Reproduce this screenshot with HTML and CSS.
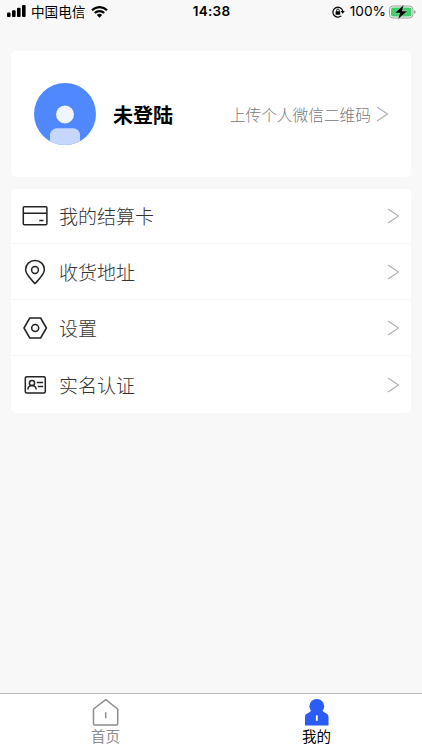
FILE: index.html
```
<!DOCTYPE html>
<html lang="zh-CN">
<head>
    <meta charset="UTF-8">
    <title>我的</title>
    <link rel="stylesheet" href="styles.css">
</head>
<body>
    <div id="container">
        <div id="status">
            <div class="st_left">
                <svg class="signal" width="19" height="12" viewBox="0 0 19 12">
                    <rect x="0" y="7.5" width="3.6" height="4.5" rx="1"/>
                    <rect x="5" y="5.3" width="3.6" height="6.7" rx="1"/>
                    <rect x="10" y="2.8" width="3.6" height="9.2" rx="1"/>
                    <rect x="15" y="0" width="3.6" height="12" rx="1"/>
                </svg>
                <span class="carrier">中国电信</span>
                <svg width="17" height="12" viewBox="0 0 17 12">
                    <path d="M1 4.2a10.6 10.6 0 0 1 15 0M3.8 7a6.6 6.6 0 0 1 9.4 0" fill="none" stroke="#000" stroke-width="2.2"/>
                    <path d="M8.5 11.8L5.8 9.1a3.8 3.8 0 0 1 5.4 0z"/>
                </svg>
            </div>
            <div class="st_time">14:38</div>
            <div class="st_right">
                <svg width="13" height="12" viewBox="0 0 13 12">
                    <path d="M9.3 9.9A5 5 0 1 1 10.8 5" fill="none" stroke="#000" stroke-width="1.2"/>
                    <path d="M8.6 5h4.2l-2.1 2.8z"/>
                    <rect x="3.6" y="5.2" width="4.6" height="3.6" rx=".5"/>
                    <path d="M4.6 5.4V4.3a1.3 1.3 0 0 1 2.6 0v1.1" fill="none" stroke="#000" stroke-width=".9"/>
                </svg>
                <span class="percent">100%</span>
                <svg width="27" height="16" viewBox="0 0 27 16">
                    <rect x=".5" y="2" width="23.4" height="12" rx="3.6" fill="#f8f8f8" stroke="#a0a0a0"/>
                    <rect x="2" y="3.5" width="20.4" height="9" rx="2.2" fill="#3fcf68"/>
                    <path d="M25 6v4c1-.4 1.5-1.1 1.5-2s-.5-1.6-1.5-2z" fill="#a0a0a0"/>
                    <path d="M14.8.8L5.6 9h5.2l-1.8 6.2L18.6 7h-5.3z" stroke="#e8f8ec" stroke-width=".4"/>
                </svg>
            </div>
        </div>

        <div id="profile" class="dbox">
            <svg class="avatar" width="62" height="62" viewBox="0 0 62 62">
                <clipPath id="round"><circle cx="31" cy="31" r="31"/></clipPath>
                <circle cx="31" cy="31" r="31" fill="#5089ff"/>
                <circle cx="31" cy="31.5" r="9" fill="#f1f5ff"/>
                <rect x="16" y="45.3" width="30" height="24" rx="7" fill="#c5d7ff" clip-path="url(#round)"/>
            </svg>
            <h2>未登陆</h2>
            <a href="#" class="upload">上传个人微信二维码</a>
            <svg class="arrow" width="13" height="16" viewBox="0 0 13 16"><path d="M1 1l10.5 7L1 15"/></svg>
        </div>

        <div id="menu" class="dbox">
            <a href="#" class="item">
                <svg class="icon" width="28" height="28" viewBox="0 0 28 28">
                    <rect x="2.3" y="4.8" width="23.6" height="18" rx="1"/>
                    <path d="M2.3 11.3h23.6M18.3 18.5h4.2"/>
                </svg>
                <span>我的结算卡</span>
                <svg class="arrow" width="13" height="16" viewBox="0 0 13 16"><path d="M1 1l10.5 7L1 15"/></svg>
            </a>
            <a href="#" class="item">
                <svg class="icon" width="28" height="28" viewBox="0 0 28 28">
                    <path d="M14 25.6C10 21.3 4.6 16.6 4.6 11.6a9.4 9.2 0 0 1 18.8 0C23.4 16.6 18 21.3 14 25.6z"/>
                    <circle cx="14" cy="12" r="3.4"/>
                </svg>
                <span>收货地址</span>
                <svg class="arrow" width="13" height="16" viewBox="0 0 13 16"><path d="M1 1l10.5 7L1 15"/></svg>
            </a>
            <a href="#" class="item">
                <svg class="icon" width="28" height="28" viewBox="0 0 28 28">
                    <path d="M8.8 4h10.8l5.8 10-5.8 10H8.8L3 14z"/>
                    <circle cx="14.2" cy="14" r="3.5"/>
                </svg>
                <span>设置</span>
                <svg class="arrow" width="13" height="16" viewBox="0 0 13 16"><path d="M1 1l10.5 7L1 15"/></svg>
            </a>
            <a href="#" class="item">
                <svg class="icon" width="28" height="28" viewBox="0 0 28 28">
                    <rect x="4.3" y="5.8" width="20" height="16.3" rx="1.5"/>
                    <circle cx="11" cy="12" r="2.6"/>
                    <path d="M6.8 18.5c.3-2.4 1.7-3.9 4.2-3.9s3.9 1.5 4.2 3.9M15.8 11.6h6.3M16.8 15.5h5.3"/>
                </svg>
                <span>实名认证</span>
                <svg class="arrow" width="13" height="16" viewBox="0 0 13 16"><path d="M1 1l10.5 7L1 15"/></svg>
            </a>
        </div>

        <div id="tabbar">
            <a href="#" class="tab">
                <svg width="28" height="28" viewBox="0 0 28 28">
                    <path d="M13.7 1.6L25.7 11v14.7a1.3 1.3 0 0 1-1.3 1.3H2.8A1.3 1.3 0 0 1 1.5 25.7V11z" fill="none" stroke="#8c8c8c" stroke-width="1.5" stroke-linejoin="round"/>
                    <path d="M13.7 14.3v6" stroke="#8c8c8c" stroke-width="1.5"/>
                </svg>
                <span>首页</span>
            </a>
            <a href="#" class="tab on">
                <svg width="28" height="28" viewBox="0 0 28 28">
                    <circle cx="13.8" cy="8.3" r="7.4" fill="#2b5cf5"/>
                    <path d="M8 12.500h11.600c.4 1.2 1.200 1.700 2.300 2.200 2.300.8 3.600 2.100 3.600 4.300v8.500H2V19c0-2.200 1.300-3.500 3.600-4.300 1.100-.5 2-1 2.400-2.200z" fill="#2b5cf5"/>
                    <path d="M13.8 17.3v5.5" stroke="#fff" stroke-width="1.8"/>
                </svg>
                <span>我的</span>
            </a>
        </div>
    </div>
</body>
</html>
```
FILE: styles.css
```
* {
    padding: 0px;
    margin: 0px;
    box-sizing: border-box;
    text-decoration: none;
}
body {
    background-color: #f8f8f8;
    font-family: "Noto Sans CJK SC", sans-serif;
}
#container {
    display: flex;
    flex-direction: column;
    width: 422px;
    height: 750px;
    overflow: hidden;
}
#status {
    display: grid;
    grid-template-columns: 1fr auto 1fr;
    align-items: center;
    height: 23px;
    padding: 0 6px 0 7px;
    color: #000;
    line-height: 23px;
    flex-shrink: 0;
}
.st_left, .st_right {
    display: flex;
    align-items: center;
}
.st_right {
    justify-content: flex-end;
}
.signal {
    margin-bottom: 1px;
}
.carrier {
    font-size: 13.6px;
    margin: 0 6px 0 5px;
}
.st_time {
    font-family: Inter, sans-serif;
    font-size: 13.5px;
    font-weight: 600;
    letter-spacing: 0.3px;
}
.percent {
    font-family: Inter, sans-serif;
    font-size: 13.7px;
    margin: 0 3px 0 5px;
}
.dbox {
    margin: 0 11px;
    background-color: #fff;
    border-radius: 5px;
    flex-shrink: 0;
}
#profile {
    display: flex;
    align-items: center;
    height: 126px;
    margin-top: 28px;
    margin-bottom: 12px;
    padding: 0 22px 0 23px;
}
#profile h2 {
    margin-left: 17px;
    font-size: 20px;
    font-weight: 700;
    color: #000;
}
.upload {
    margin-left: auto;
    margin-right: 5px;
    font-size: 15.7px;
    font-weight: 300;
    color: #777;
}
.arrow path {
    fill: none;
    stroke: #b0b0b0;
    stroke-width: 1.2;
}
.item {
    display: flex;
    align-items: center;
    height: 56px;
    padding: 1px 11px 0 10px;
    border-bottom: 1px solid #f7f7f7;
}
.item:first-child {
    height: 55px;
    padding-top: 0;
}
.item:last-child {
    height: 57px;
    padding-top: 0;
    border-bottom: none;
}
.item span {
    margin-left: 10px;
    padding-bottom: 1px;
    font-size: 19px;
    font-weight: 300;
    color: #333;
}
.item .arrow {
    margin-left: auto;
}
.icon {
    fill: none;
    stroke: #222;
    stroke-width: 1.5;
    stroke-linejoin: round;
}
#tabbar {
    display: flex;
    height: 57px;
    margin-top: auto;
    background-color: #fff;
    border-top: 1px solid #bbb;
    flex-shrink: 0;
}
.tab {
    display: flex;
    flex: 1;
    flex-direction: column;
    align-items: center;
    padding-top: 4px;
    font-size: 14.5px;
    line-height: 20px;
    color: #8c8c8c;
}
.tab.on {
    color: #000;
}
```
